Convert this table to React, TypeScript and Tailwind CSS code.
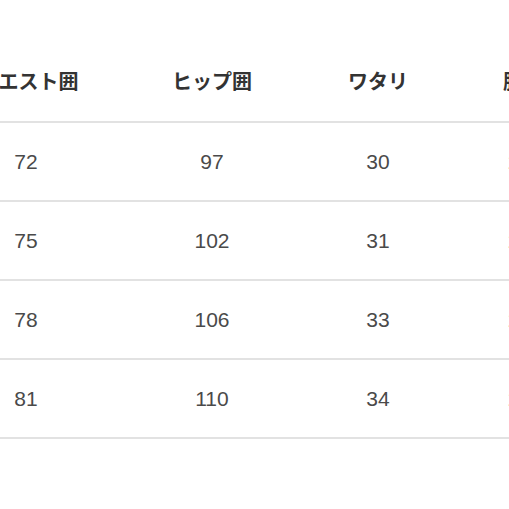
import React from "react";

const ROWS = [
  ["72", "97", "30", "26"],
  ["75", "102", "31", "27"],
  ["78", "106", "33", "28"],
  ["81", "110", "34", "29"],
];

const App: React.FC = () => {
  return (
    <div className="h-[509px] w-[509px] overflow-hidden bg-white pt-[40px]">
      <div className="ml-[-72px] w-[700px]">
        {/* 見出し */}
        <div
          className="grid h-[83px] grid-cols-[201px_166px_166px_166px] items-center border-b-2 border-[#e2e2e2] text-[20px] font-bold text-[#333]"
          style={{ fontFamily: '"Noto Sans CJK JP", "Noto Sans", sans-serif' }}
        >
          <div className="text-center">ウエスト囲</div>
          <div className="text-center">ヒップ囲</div>
          <div className="text-center">ワタリ</div>
          <div className="pl-[42px]">股下丈</div>
        </div>

        {/* 数値 */}
        {ROWS.map((r, i) => (
          <div
            key={i}
            className="grid h-[79px] grid-cols-[201px_166px_166px_166px] items-center border-b-2 border-[#e2e2e2] text-[21px] text-[#4a4a4a]"
            style={{ fontFamily: '"Liberation Sans", Arial, sans-serif' }}
          >
            <div className="pr-[5px] text-center">{r[0]}</div>
            <div className="text-center">{r[1]}</div>
            <div className="text-center">{r[2]}</div>
            <div className="pl-[47px]">{r[3]}</div>
          </div>
        ))}
      </div>
    </div>
  );
};

export default App;
